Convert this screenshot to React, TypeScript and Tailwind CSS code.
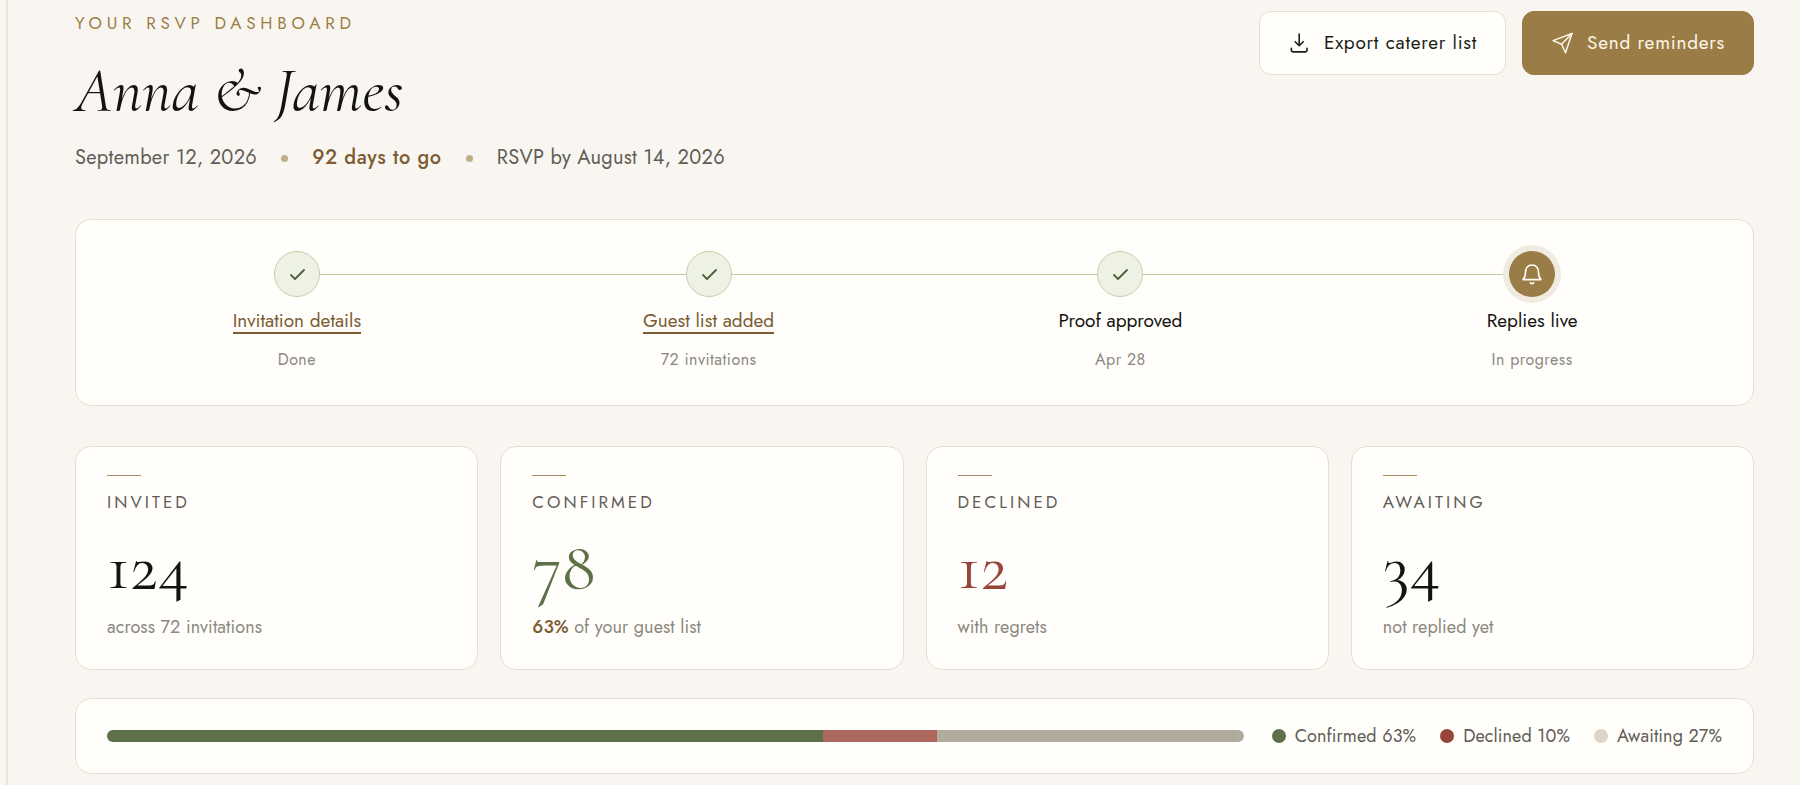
import React from "react";

const CARD = "rounded-2xl border border-[#e3e0d0] bg-[#fffefb]";

function DownloadIcon() {
  return (
    <svg className="size-[22px] shrink-0" viewBox="0 0 22 22" fill="none" stroke="currentColor" strokeWidth="1.6" strokeLinecap="round" strokeLinejoin="round" aria-hidden="true">
      <path d="M11.200 2v11.700M7.200 9.700l4 4 4-4" />
      <path d="M3.400 16.200v2a1.700 1.700 0 0 0 1.700 1.700h12.200a1.700 1.700 0 0 0 1.700-1.700v-2" />
    </svg>
  );
}

function SendIcon() {
  return (
    <svg className="size-[22px] shrink-0" viewBox="0 0 22 22" fill="none" stroke="currentColor" strokeWidth="1.5" strokeLinecap="round" strokeLinejoin="round" aria-hidden="true">
      <path d="M21 1.500L14.500 20.800L10.600 12.300L2 8.600Z" />
      <path d="M21 1.500L10.600 12.300" />
    </svg>
  );
}

function CheckIcon() {
  return (
    <svg className="size-5" viewBox="0 0 20 20" fill="none" stroke="currentColor" strokeWidth="1.8" strokeLinecap="round" strokeLinejoin="round" aria-hidden="true">
      <path d="M4 11l4 4 9-9" />
    </svg>
  );
}

function BellIcon() {
  return (
    <svg className="size-[22px]" viewBox="0 0 22 22" fill="none" stroke="currentColor" strokeWidth="1.6" strokeLinecap="round" strokeLinejoin="round" aria-hidden="true">
      <path d="M2 16.600h18c-1.900-1.900-2.500-3.900-2.500-7.200 0-4.400-2.500-7.400-6.500-7.400S4.500 5 4.500 9.400c0 3.300-.6 5.300-2.500 7.200z" />
      <path d="M9.400 19.900c.9.800 2.300.800 3.200 0" />
    </svg>
  );
}

const steps = [
  { label: "Invitation details", note: "Done", href: "#details" },
  { label: "Guest list added", note: "72 invitations", href: "#guests" },
  { label: "Proof approved", note: "Apr 28" },
  { label: "Replies live", note: "In progress", live: true },
];

const stats = [
  { label: "Invited", value: "124", note: "across 72 invitations", color: "text-[#14140f]" },
  { label: "Confirmed", value: "78", strong: "63%", note: " of your guest list", color: "text-[#5d7046]" },
  { label: "Declined", value: "12", note: "with regrets", color: "text-[#984539]" },
  { label: "Awaiting", value: "34", note: "not replied yet", color: "text-[#14140f]" },
];

const replies = [
  { label: "Confirmed", share: 63, bar: "bg-[#5f7148]", dot: "bg-[#5f7148]" },
  { label: "Declined", share: 10, bar: "bg-[#ab675c]", dot: "bg-[#984539]" },
  { label: "Awaiting", share: 27, bar: "bg-[#b1aa9e]", dot: "bg-[#ddd5c5]" },
];

export default function App() {
  return (
    <div className="flex min-h-screen bg-[#f9f6f1] pl-1.5 font-['Jost','Lato',sans-serif] text-[#5f5d56]">
      <main className="min-w-0 grow border-l-2 border-[#e9e5d6] pt-[11px] pr-[46px] pb-[11px] pl-[67px]">
        <header className="flex flex-wrap items-start justify-between gap-4">
          <div>
            <p className="text-[17px] leading-6 tracking-[0.28em] text-[#9b7d46] uppercase">Your RSVP dashboard</p>
            <h1 className="mt-[19px] font-['Cormorant_Garamond','Liberation_Serif',serif] text-[63px] leading-[72px] font-normal text-[#14140f] italic">
              Anna &amp; James
            </h1>
            <p className="mt-[18px] flex flex-wrap items-center gap-6 text-xl leading-7 tracking-[0.015em]">
              <span>September 12, 2026</span>
              <span className="size-[7px] rounded-full bg-[#bfae88]" />
              <strong className="font-medium tracking-[0.03em] text-[#7b5c33]">92 days to go</strong>
              <span className="size-[7px] rounded-full bg-[#bfae88]" />
              <span>RSVP by August 14, 2026</span>
            </p>
          </div>
          <div className="flex gap-4">
            <button type="button" className="flex h-16 items-center gap-3.5 rounded-xl border border-[#e3e0d0] bg-[#fffefb] px-7 text-[19px] tracking-[0.04em] text-[#1d1d18]">
              <DownloadIcon />
              Export caterer list
            </button>
            <button type="button" className="flex h-16 items-center gap-3.5 rounded-xl border border-[#9a7c46] bg-[#9a7c46] px-7 text-[19px] tracking-[0.04em] text-[#fdf6e6]">
              <SendIcon />
              Send reminders
            </button>
          </div>
        </header>

        <ol className={`${CARD} mt-[47px] grid grid-cols-4 px-[15px] pt-[31px] pb-[33px]`}>
          {steps.map((step, i) => (
            <li key={step.label} className="flex flex-col items-center">
              <div className="flex w-full items-center">
                <span className={`h-px grow ${i > 0 ? "bg-[#bfc99f]" : ""}`} />
                {step.live ? (
                  <span className="flex size-[46px] items-center justify-center rounded-full bg-[#9a7c46] text-[#fffefb] ring-6 ring-[#f0ebe0]">
                    <BellIcon />
                  </span>
                ) : (
                  <span className="flex size-[46px] items-center justify-center rounded-full border border-[#c5cfaa] bg-[#eef2e5] text-[#4f6039]">
                    <CheckIcon />
                  </span>
                )}
                <span className={`h-px grow ${i < steps.length - 1 ? "bg-[#bfc99f]" : ""}`} />
              </div>
              {step.href ? (
                <a href={step.href} className="mt-3 border-b-2 border-[#7b5c33] text-[19px] leading-[23px] text-[#7b5c33]">
                  {step.label}
                </a>
              ) : (
                <span className="mt-3 border-b-2 border-transparent text-[19px] leading-[23px] text-[#14140f]">{step.label}</span>
              )}
              <span className="mt-3.5 text-base leading-6 tracking-[0.03em] text-[#8b8981]">{step.note}</span>
            </li>
          ))}
        </ol>

        <section className="mt-10 grid grid-cols-4 gap-[22px]">
          {stats.map((stat) => (
            <article key={stat.label} className={`${CARD} px-[31px] pt-7 pb-[30px]`}>
              <div className="h-px w-[34px] bg-[#a98a5c]" />
              <h2 className="mt-3.5 text-[17px] leading-6 tracking-[0.18em] uppercase">{stat.label}</h2>
              <p className={`mt-[18px] font-['Cormorant_Garamond','Liberation_Serif',serif] text-[69px] leading-[68px] ${stat.color}`}>
                {stat.value}
              </p>
              <p className="mt-[15px] text-lg leading-6 tracking-[0.005em] text-[#8b8981]">
                {stat.strong && <strong className="font-medium text-[#7b5c33]">{stat.strong}</strong>}
                {stat.note}
              </p>
            </article>
          ))}
        </section>

        <section className={`${CARD} mt-7 flex items-center gap-7 px-[31px] py-[25px]`}>
          <div className="flex h-3 grow overflow-hidden rounded-full">
            {replies.map((r) => (
              <span key={r.label} className={r.bar} style={{ width: `${r.share}%` }} />
            ))}
          </div>
          <ul className="flex gap-6 text-lg leading-6 tracking-[0.005em]">
            {replies.map((r) => (
              <li key={r.label} className="flex items-center gap-[9px]">
                <span className={`size-3.5 rounded-full ${r.dot}`} />
                {r.label} {r.share}%
              </li>
            ))}
          </ul>
        </section>
      </main>
    </div>
  );
}
